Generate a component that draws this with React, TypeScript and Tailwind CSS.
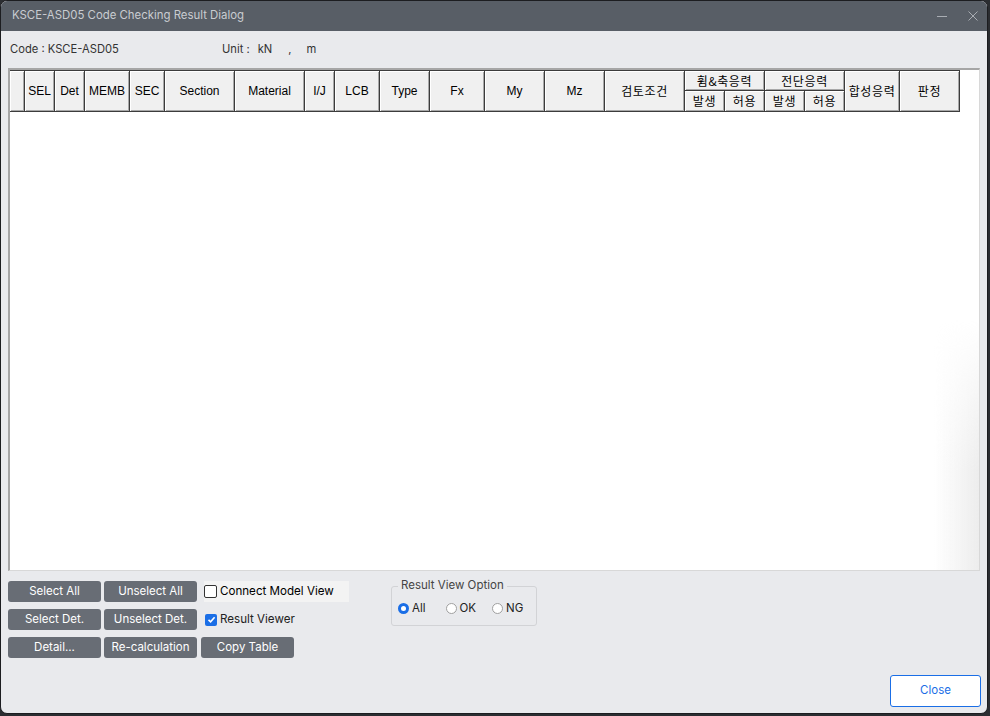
import React from "react";

const cell =
  "flex items-center justify-center bg-[#f0f0f0] border-r border-b border-[#3c3c3c] shadow-[inset_1px_1px_0_#ffffff,inset_-1px_-1px_0_#a8a8a8] text-[12px] text-black leading-none overflow-hidden whitespace-nowrap";

const ko = { fontFamily: '"Noto Sans CJK KR", "Liberation Sans", sans-serif', letterSpacing: "0.6px" };

function Btn({ label, w = "w-[93px]" }: { label: string; w?: string }) {
  return (
    <div
      className={`${w} h-[21px] rounded-[3px] bg-[#686d75] text-white text-[11.5px] flex items-center justify-center leading-none`}
    >
      {label}
    </div>
  );
}

function Radio({ checked, label }: { checked?: boolean; label: string }) {
  return (
    <div className="flex items-center">
      {checked ? (
        <div className="w-[11px] h-[11px] rounded-full bg-[#1a6ee6] flex items-center justify-center">
          <div className="w-[5px] h-[5px] rounded-full bg-white" />
        </div>
      ) : (
        <div className="w-[11px] h-[11px] rounded-full bg-white border border-[#a0a0a0]" />
      )}
      <span className="ml-[3px] text-[11.5px] text-[#222] leading-none">{label}</span>
    </div>
  );
}

export default function App() {
  const simple: { t: string; ko?: boolean }[] = [
    { t: "" },
    { t: "SEL" },
    { t: "Det" },
    { t: "MEMB" },
    { t: "SEC" },
    { t: "Section" },
    { t: "Material" },
    { t: "I/J" },
    { t: "LCB" },
    { t: "Type" },
    { t: "Fx" },
    { t: "My" },
    { t: "Mz" },
    { t: "검토조건", ko: true },
  ];
  return (
    <div
      className="w-[990px] h-[716px] bg-[#2b2d31] overflow-hidden"
      style={{ fontFamily: 'Inter, "Noto Sans", "Noto Sans CJK KR", sans-serif' }}
    >
      <div className="w-[988px] h-[714px] rounded-[7px] border border-[#1c1d20] bg-[#e9eaed] flex flex-col overflow-hidden">
        {/* Title bar */}
        <div className="h-[30px] shrink-0 bg-[#585e66] flex items-center pl-[11px] pr-[9px]">
          <span className="text-[11.4px] text-[#c9ccd1] leading-none">
            KSCE-ASD05 Code Checking Result Dialog
          </span>
          <div className="ml-auto flex items-center gap-[21px]">
            <div className="w-[10px] h-[1px] bg-[#a9adb3]" />
            <svg width="10" height="10" viewBox="0 0 10 10">
              <path d="M0.5 0.5L9.5 9.5M9.5 0.5L0.5 9.5" stroke="#a9adb3" strokeWidth="1" />
            </svg>
          </div>
        </div>

        {/* Code / Unit row */}
        <div className="h-[37px] shrink-0 flex items-center pl-[9px] text-[11.2px] text-[#333] leading-none">
          <span className="w-[212px]">Code : KSCE-ASD05</span>
          <span>Unit :</span>
          <span className="ml-[8px]">kN</span>
          <span className="ml-[16px]">,</span>
          <span className="ml-[15px]">m</span>
        </div>

        {/* Table */}
        <div className="mx-[7px] h-[503px] shrink-0 bg-white border-t-2 border-l-2 border-[#a6a6a6] border-r border-b border-r-[#d8d8d8] border-b-[#d8d8d8] overflow-hidden relative">
          <div
            className="grid grid-cols-[15px_30px_30px_45px_35px_70px_70px_30px_45px_50px_55px_60px_60px_80px_40px_40px_40px_40px_55px_60px] grid-rows-[20px_21px] w-[950px] border-t border-[#3c3c3c]"
            style={{ fontFamily: '"Liberation Sans", "Noto Sans CJK KR", sans-serif' }}
          >
            {simple.map((c, i) => (
              <div key={i} className={`${cell} row-span-2`} style={c.ko ? ko : undefined}>
                {c.t}
              </div>
            ))}
            <div className={`${cell} col-span-2`} style={ko}>
              휨&amp;축응력
            </div>
            <div className={`${cell} col-span-2`} style={ko}>
              전단응력
            </div>
            <div className={`${cell} row-span-2`} style={ko}>
              합성응력
            </div>
            <div className={`${cell} row-span-2`} style={ko}>
              판정
            </div>
            <div className={cell} style={ko}>발생</div>
            <div className={cell} style={ko}>허용</div>
            <div className={cell} style={ko}>발생</div>
            <div className={cell} style={ko}>허용</div>
          </div>
          <div className="absolute right-0 top-[250px] bottom-0 w-[45px] bg-[linear-gradient(to_right,rgba(255,255,255,0),#ededed)] [mask-image:linear-gradient(to_bottom,transparent,black_60%,black)]" />
        </div>

        {/* Bottom controls */}
        <div className="flex pl-[7px] pt-[10px] shrink-0">
          <div className="flex flex-col gap-[7px]">
            <div className="flex items-center">
              <Btn label="Select All" />
              <div className="ml-[3px]">
                <Btn label="Unselect All" />
              </div>
              <div className="ml-[7px] w-[145px] h-[21px] bg-[#f3f3f3] flex items-center">
                <div className="w-[13px] h-[13px] rounded-[2px] border border-[#333] bg-white" />
                <span className="ml-[3px] text-[11.6px] text-black leading-none">Connect Model View</span>
              </div>
            </div>
            <div className="flex items-center">
              <Btn label="Select Det." />
              <div className="ml-[3px]">
                <Btn label="Unselect Det." />
              </div>
              <div className="ml-[8px] flex items-center">
                <div className="w-[12px] h-[12px] rounded-[2px] bg-[#1a6ee6] flex items-center justify-center">
                  <svg width="9" height="9" viewBox="0 0 9 9">
                    <path d="M1.5 4.8L3.6 6.8L7.6 2.2" stroke="white" strokeWidth="1.6" fill="none" />
                  </svg>
                </div>
                <span className="ml-[3px] text-[11.6px] text-[#222] leading-none">Result Viewer</span>
              </div>
            </div>
            <div className="flex items-center">
              <Btn label="Detail..." />
              <div className="ml-[3px]">
                <Btn label="Re-calculation" />
              </div>
              <div className="ml-[4px]">
                <Btn label="Copy Table" />
              </div>
            </div>
          </div>

          <div className="ml-[42px] mt-[5px] relative w-[146px] h-[40px] border border-[#d2d3d6] rounded-[3px]">
            <div className="absolute left-[6px] top-[-7px] bg-[#e9eaed] px-[3px] text-[11.5px] text-[#444] leading-none">
              Result View Option
            </div>
            <div className="flex items-center pl-[6px] pt-[16px]">
              <Radio checked label="All" />
              <div className="ml-[20px]">
                <Radio label="OK" />
              </div>
              <div className="ml-[16px]">
                <Radio label="NG" />
              </div>
            </div>
          </div>
        </div>

        <div className="flex justify-end pr-[6px] mt-[17px]">
          <div className="w-[91px] h-[32px] rounded-[3px] border border-[#1a6ee6] bg-white flex items-center justify-center text-[11.5px] text-[#1a6ee6] leading-none">
            Close
          </div>
        </div>
      </div>
    </div>
  );
}
